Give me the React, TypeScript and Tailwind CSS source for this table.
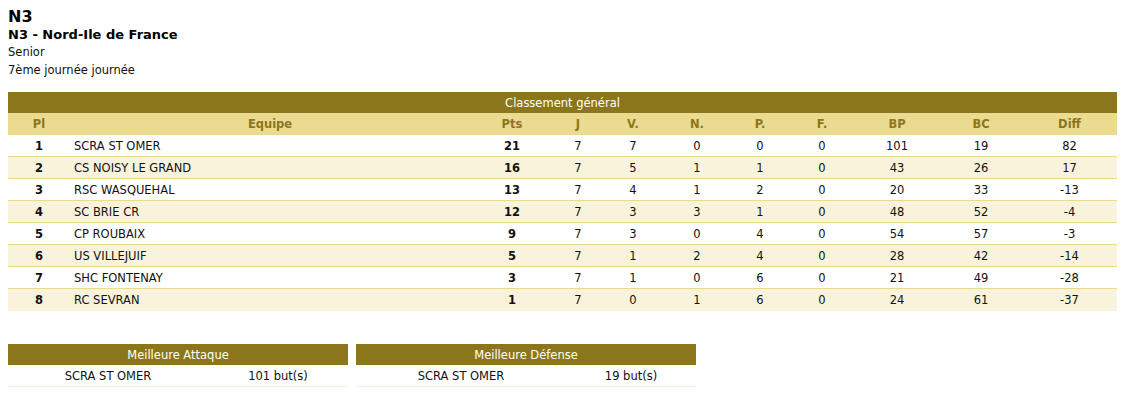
import React from "react";

const rows: (string | number)[][] = [
  [1, "SCRA ST OMER", 21, 7, 7, 0, 0, 0, 101, 19, 82],
  [2, "CS NOISY LE GRAND", 16, 7, 5, 1, 1, 0, 43, 26, 17],
  [3, "RSC WASQUEHAL", 13, 7, 4, 1, 2, 0, 20, 33, -13],
  [4, "SC BRIE CR", 12, 7, 3, 3, 1, 0, 48, 52, -4],
  [5, "CP ROUBAIX", 9, 7, 3, 0, 4, 0, 54, 57, -3],
  [6, "US VILLEJUIF", 5, 7, 1, 2, 4, 0, 28, 42, -14],
  [7, "SHC FONTENAY", 3, 7, 1, 0, 6, 0, 21, 49, -28],
  [8, "RC SEVRAN", 1, 7, 0, 1, 6, 0, 24, 61, -37],
];

const headers = ["Pl", "Equipe", "Pts", "J", "V.", "N.", "P.", "F.", "BP", "BC", "Diff"];
const grid =
  "grid grid-cols-[62px_400px_84px_48px_62px_66px_60px_64px_86px_82px_95px]";

export default function App() {
  return (
    <div className="min-h-[394px] bg-white font-['DejaVu_Sans',Verdana,sans-serif] text-[11.5px] text-[#111] pl-[8px] pr-[12px] pt-[7px]">
      <div className="text-[16px] font-bold leading-[19px] text-black">N3</div>
      <div className="text-[13px] font-bold leading-[17px] text-black">N3 - Nord-Ile de France</div>
      <div className="leading-[18px]">Senior</div>
      <div className="leading-[18px]">7ème journée journée</div>

      <div className="mt-[13px] w-[1109px]">
        <div className="h-[21px] pt-[2px] bg-[#8b761c] text-white flex items-center justify-center">
          Classement général
        </div>
        <div className={`${grid} h-[22px] pt-[2px] bg-[#eadb90] text-[#8b761c] font-bold items-center`}>
          {headers.map((h) => (
            <div key={h} className="text-center">
              {h}
            </div>
          ))}
        </div>
        {rows.map((r, i) => (
          <div
            key={i}
            className={`${grid} h-[22px] pt-[2px] items-center ${
              i % 2 === 1 ? "bg-[#f9f3dc]" : "bg-white"
            } ${i < rows.length - 1 ? "border-b border-[#ebd98c]" : ""}`}
          >
            {r.map((c, j) => (
              <div
                key={j}
                className={
                  j === 1
                    ? "pl-[4px] text-left"
                    : j === 0 || j === 2
                    ? "text-center font-bold"
                    : "text-center"
                }
              >
                {c}
              </div>
            ))}
          </div>
        ))}
      </div>

      <div className="mt-[33px] flex gap-[8px]">
        <div className="w-[340px]">
          <div className="h-[21px] pt-[2px] bg-[#8b761c] text-white flex items-center justify-center">
            Meilleure Attaque
          </div>
          <div className="grid grid-cols-[200px_140px] h-[22px] pt-[2px] items-center border-b border-[#f7f0d8]">
            <div className="text-center">SCRA ST OMER</div>
            <div className="text-center">101 but(s)</div>
          </div>
        </div>
        <div className="w-[340px]">
          <div className="h-[21px] pt-[2px] bg-[#8b761c] text-white flex items-center justify-center">
            Meilleure Défense
          </div>
          <div className="grid grid-cols-[210px_130px] h-[22px] pt-[2px] items-center border-b border-[#f7f0d8]">
            <div className="text-center">SCRA ST OMER</div>
            <div className="text-center">19 but(s)</div>
          </div>
        </div>
      </div>
    </div>
  );
}
